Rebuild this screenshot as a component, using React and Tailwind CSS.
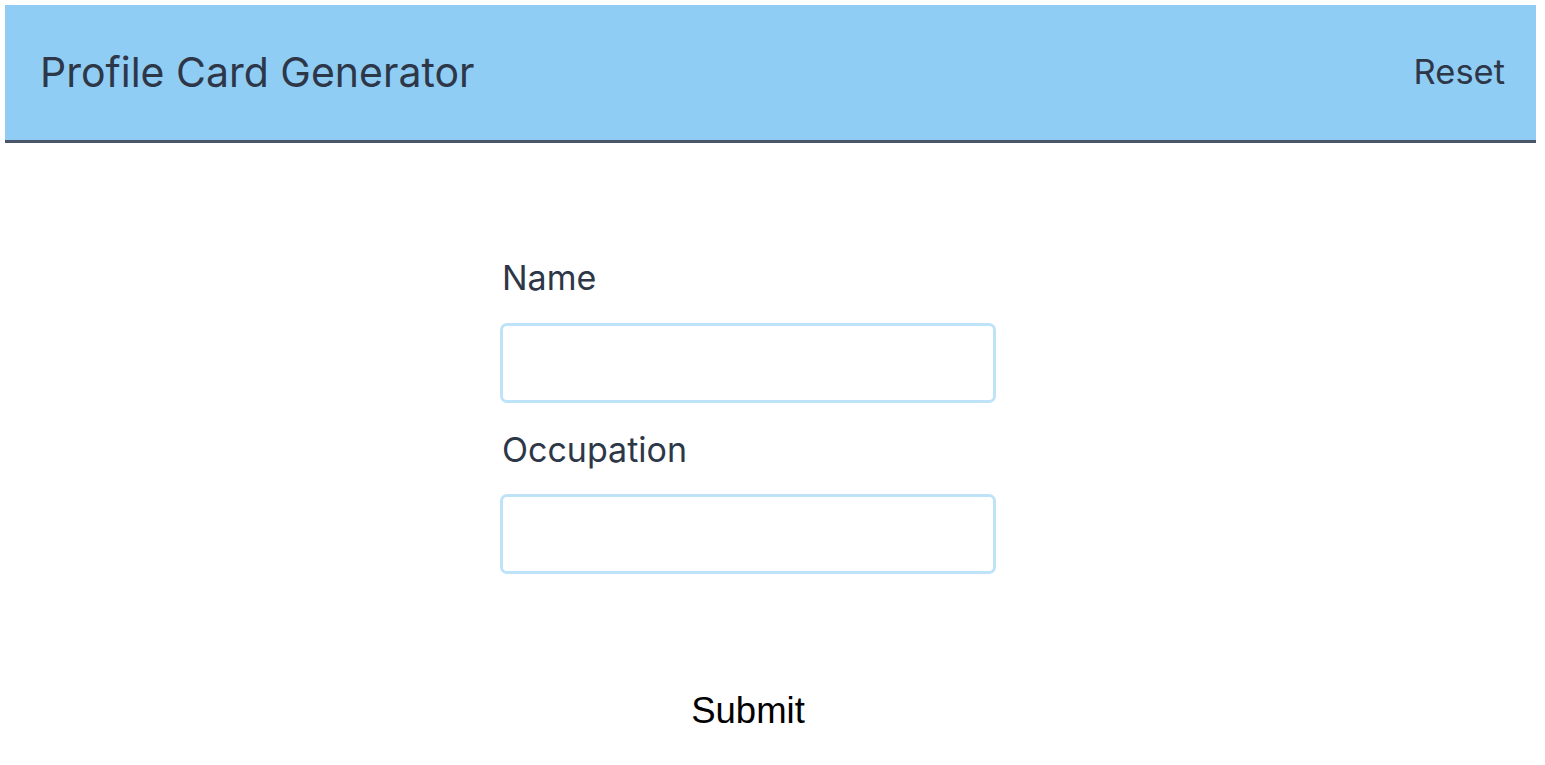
export default function App() {
  return (
    <div className="min-h-screen bg-white pt-[5px]" style={{ fontFamily: 'Inter, "Liberation Sans", sans-serif' }}>
      <header className="ml-[5px] w-[1531px] h-[138px] bg-[#90cdf4] border-b-[3px] border-[#4a5568] flex items-center justify-between pl-[35px] pr-[31px]">
        <h1 className="text-[41px] leading-none text-[#2d3748] font-normal">Profile Card Generator</h1>
        <button className="text-[34.5px] leading-none text-[#2d3748]">Reset</button>
      </header>
      <form className="ml-[500px] w-[496px] pt-[118px] flex flex-col">
        <label className="pl-[2px] text-[34px] leading-none text-[#2d3748]">Name</label>
        <input type="text" className="mt-[28px] h-[80px] w-full rounded-[7px] border-[3px] border-[#bee3f8] outline-none" />
        <label className="pl-[2px] mt-[30px] text-[34px] leading-none text-[#2d3748]">Occupation</label>
        <input type="text" className="mt-[27px] h-[80px] w-full rounded-[7px] border-[3px] border-[#bee3f8] outline-none" />
        <div className="mt-[119px] flex justify-center">
          <button type="button" className="text-[36.5px] leading-none text-black" style={{ fontFamily: '"Liberation Sans", Arial, sans-serif' }}>Submit</button>
        </div>
      </form>
    </div>
  );
}
